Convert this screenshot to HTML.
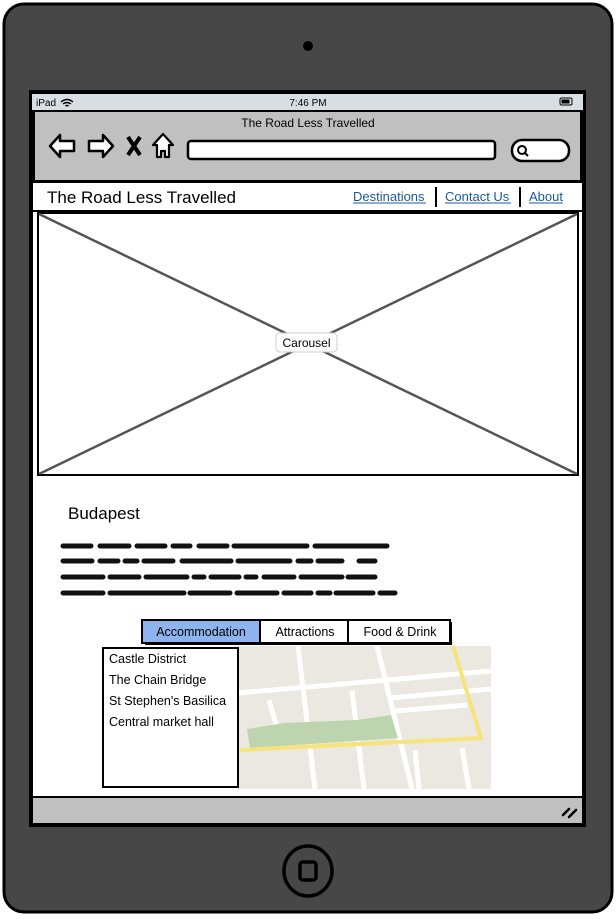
<!DOCTYPE html>
<html><head><meta charset="utf-8"><style>
body{margin:0;width:616px;height:916px;overflow:hidden;background:#fff;font-family:"Liberation Sans",sans-serif}
svg text{font-family:"Liberation Sans",sans-serif}
</style></head><body>
<svg width="616" height="916" viewBox="0 0 616 916" xmlns="http://www.w3.org/2000/svg">
<rect x="4" y="4" width="608" height="908" rx="20" fill="#474747" stroke="#000" stroke-width="3"/>
<circle cx="308" cy="46" r="5" fill="#000"/>
<rect x="29" y="90" width="557" height="737" fill="#000"/>
<rect x="32" y="94" width="551" height="16" fill="#d8dee2"/>
<text x="36" y="106" font-size="10">iPad</text>
<path d="M61 102q6-5 12 0M63 104q4-3 8 0M65.5 106q1.5-1 3 0" stroke="#000" stroke-width="1.4" fill="none"/>
<text x="308" y="106" font-size="10" text-anchor="middle">7:46 PM</text>
<rect x="560" y="98" width="12" height="7" rx="1.5" fill="none" stroke="#000"/><rect x="561.5" y="99.5" width="8" height="4" fill="#000"/>
<rect x="34" y="111" width="547" height="70" fill="#c0c0c0" stroke="#000" stroke-width="2"/>
<text x="308" y="127" font-size="12" text-anchor="middle">The Road Less Travelled</text>
<path d="M50 146l10-11v6h14v10h-14v6z" fill="#fff" stroke="#000" stroke-width="2.5" stroke-linejoin="round"/>
<path d="M113 146l-10-11v6h-14v10h14v6z" fill="#fff" stroke="#000" stroke-width="2.5" stroke-linejoin="round"/>
<path d="M128 137l12 18M140 137l-12 18" stroke="#000" stroke-width="4"/>
<path d="M163 134l-10 11h4v12h4v-6h4v6h4v-12h4z" fill="#fff" stroke="#000" stroke-width="2.2" stroke-linejoin="round"/>
<rect x="188" y="141" width="307" height="18" rx="3" fill="#fff" stroke="#000" stroke-width="2.5"/>
<rect x="512" y="140" width="57" height="21" rx="10" fill="#fff" stroke="#000" stroke-width="2.5"/>
<circle cx="522" cy="150" r="4" fill="none" stroke="#000" stroke-width="2"/><path d="M525 153l3 3" stroke="#000" stroke-width="2"/>
<rect x="33" y="182" width="549" height="615" fill="#fff"/>
<path d="M33 182h549M33 211h549" stroke="#000" stroke-width="2"/>
<text x="47" y="203" font-size="17">The Road Less Travelled</text>
<g font-size="13" fill="#1a5aa0">
<text x="353" y="201">Destinations</text><text x="445" y="201">Contact Us</text><text x="529" y="201">About</text></g>
<path d="M353 203h73M445 203h66M529 203h34" stroke="#1a5aa0"/>
<path d="M436 187v20M520 187v20" stroke="#000" stroke-width="2"/>
<rect x="38" y="213" width="540" height="262" fill="#fff" stroke="#000" stroke-width="2"/>
<path d="M39 214L577 474M577 214L39 474" stroke="#555" stroke-width="2.5"/>
<rect x="276" y="333" width="61" height="19" rx="4" fill="#fff" stroke="#ccc"/>
<text x="306.5" y="347" font-size="12" text-anchor="middle">Carousel</text>
<text x="68" y="519" font-size="17">Budapest</text>
<g stroke="#111" stroke-width="5" stroke-linecap="round">
<path d="M63 546h28M100 546h29M137 546h28M173 546h17M199 546h28M234 546h73M315 546h72"/>
<path d="M63 561h29M100 561h18M125 561h12M144 561h29M182 561h49M238 561h52M298 561h13M318 561h24M359 561h16"/>
<path d="M63 577h40M110 577h29M146 577h41M194 577h10M211 577h28M246 577h10M264 577h30M301 577h41M348 577h27"/>
<path d="M63 593h40M110 593h74M190 593h40M237 593h40M284 593h27M318 593h12M336 593h37M380 593h15"/>
</g>
<rect x="238" y="646" width="253" height="143" fill="#ebe8e1"/>
<g stroke="#fff" stroke-width="5" fill="none">
<path d="M238 693l253-22M391 698l100-9M395 711l72-6"/>
<path d="M298 646l17 143M377 646l35 143M269 700l9 31M352 691l12 98M462 748l7 41M415 750l4 39"/>
</g>
<path d="M247 729l37-6 73-3 34-5 7 23-148 10z" fill="#bdd5ae"/>
<path d="M453 646l28 92-241 12" stroke="#f6e37a" stroke-width="4" fill="none"/>
<rect x="142" y="620" width="308" height="23" fill="#fff" stroke="#000" stroke-width="2"/>
<rect x="143" y="621" width="117" height="21" fill="#8db4ec"/>
<path d="M260 620v23M348 620v23" stroke="#000" stroke-width="2"/>
<path d="M451 622v22h-306" stroke="#000" stroke-width="2" fill="none"/>
<text x="201" y="636" font-size="12.5" text-anchor="middle">Accommodation</text>
<text x="305" y="636" font-size="12.5" text-anchor="middle">Attractions</text>
<text x="400" y="636" font-size="12.5" text-anchor="middle">Food &amp; Drink</text>
<rect x="103" y="648" width="135" height="139" fill="#fff" stroke="#000" stroke-width="2"/>
<g font-size="12.5"><text x="109" y="663">Castle District</text><text x="109" y="684">The Chain Bridge</text><text x="109" y="705">St Stephen's Basilica</text><text x="109" y="726">Central market hall</text></g>
<rect x="33" y="798" width="549" height="25" fill="#c0c0c0"/>
<path d="M33 797h549" stroke="#000" stroke-width="2"/>
<path d="M563 815l6-6M569 817l7-7" stroke="#000" stroke-width="2.5" stroke-linecap="round"/>
<ellipse cx="308" cy="871" rx="24" ry="25" fill="none" stroke="#000" stroke-width="3.5"/>
<rect x="300" y="862" width="16" height="18" rx="3" fill="none" stroke="#000" stroke-width="3.5"/>
</svg>
</body></html>
